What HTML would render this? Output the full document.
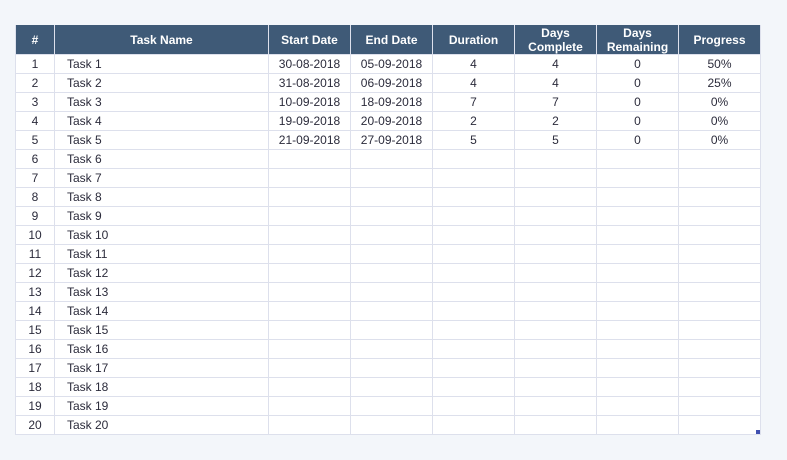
<!DOCTYPE html>
<html><head><meta charset="utf-8"><style>
html,body{margin:0;padding:0;background:#f3f6fa;width:787px;height:460px;overflow:hidden;font-family:"Liberation Sans",Arial,sans-serif;}
.g{position:absolute;left:15px;top:25px;display:grid;grid-template-columns:38px 213px 81px 81px 81px 81px 81px 81px;grid-template-rows:29px repeat(20,18px);gap:1px;background:#dde0ec;padding:0 1px 1px 1px;}
.g div{background:#fff;font-size:12px;color:#2b2b3b;text-align:center;line-height:18px;white-space:nowrap;}
.g div.h{background:#3f5a77;color:#fff;font-weight:bold;display:flex;align-items:center;justify-content:center;line-height:14px;}
.g div.n{text-align:left;padding-left:12px;}
.c{position:absolute;left:756px;top:430px;width:4px;height:4px;background:#4050b0;}
</style></head><body>
<div class="g">
<div class="h">#</div><div class="h">Task Name</div><div class="h">Start Date</div><div class="h">End Date</div><div class="h">Duration</div><div class="h">Days<br>Complete</div><div class="h">Days<br>Remaining</div><div class="h">Progress</div>
<div>1</div><div class="n">Task 1</div><div>30-08-2018</div><div>05-09-2018</div><div>4</div><div>4</div><div>0</div><div>50%</div>
<div>2</div><div class="n">Task 2</div><div>31-08-2018</div><div>06-09-2018</div><div>4</div><div>4</div><div>0</div><div>25%</div>
<div>3</div><div class="n">Task 3</div><div>10-09-2018</div><div>18-09-2018</div><div>7</div><div>7</div><div>0</div><div>0%</div>
<div>4</div><div class="n">Task 4</div><div>19-09-2018</div><div>20-09-2018</div><div>2</div><div>2</div><div>0</div><div>0%</div>
<div>5</div><div class="n">Task 5</div><div>21-09-2018</div><div>27-09-2018</div><div>5</div><div>5</div><div>0</div><div>0%</div>
<div>6</div><div class="n">Task 6</div><div></div><div></div><div></div><div></div><div></div><div></div>
<div>7</div><div class="n">Task 7</div><div></div><div></div><div></div><div></div><div></div><div></div>
<div>8</div><div class="n">Task 8</div><div></div><div></div><div></div><div></div><div></div><div></div>
<div>9</div><div class="n">Task 9</div><div></div><div></div><div></div><div></div><div></div><div></div>
<div>10</div><div class="n">Task 10</div><div></div><div></div><div></div><div></div><div></div><div></div>
<div>11</div><div class="n">Task 11</div><div></div><div></div><div></div><div></div><div></div><div></div>
<div>12</div><div class="n">Task 12</div><div></div><div></div><div></div><div></div><div></div><div></div>
<div>13</div><div class="n">Task 13</div><div></div><div></div><div></div><div></div><div></div><div></div>
<div>14</div><div class="n">Task 14</div><div></div><div></div><div></div><div></div><div></div><div></div>
<div>15</div><div class="n">Task 15</div><div></div><div></div><div></div><div></div><div></div><div></div>
<div>16</div><div class="n">Task 16</div><div></div><div></div><div></div><div></div><div></div><div></div>
<div>17</div><div class="n">Task 17</div><div></div><div></div><div></div><div></div><div></div><div></div>
<div>18</div><div class="n">Task 18</div><div></div><div></div><div></div><div></div><div></div><div></div>
<div>19</div><div class="n">Task 19</div><div></div><div></div><div></div><div></div><div></div><div></div>
<div>20</div><div class="n">Task 20</div><div></div><div></div><div></div><div></div><div></div><div></div>
</div>
<div class="c"></div>
</body></html>
